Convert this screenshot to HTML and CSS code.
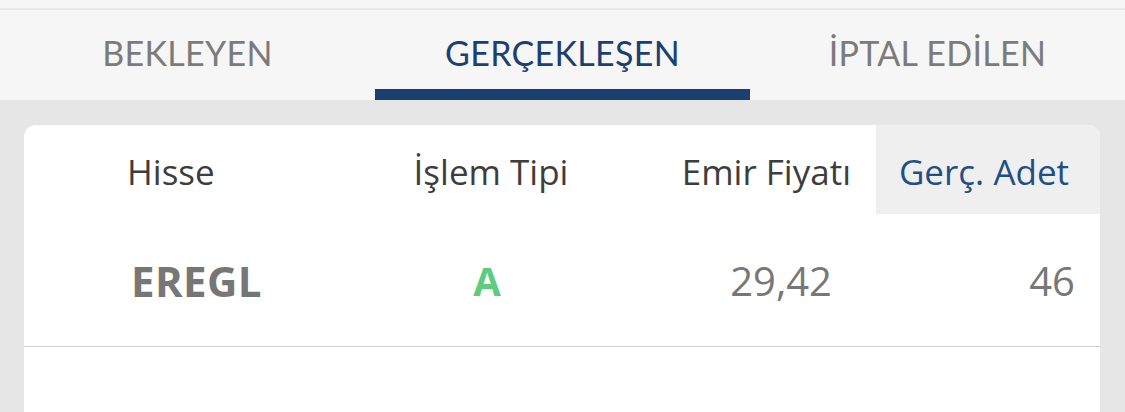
FILE: index.html
```html
<!DOCTYPE html>
<html lang="tr">
<head>
<meta charset="utf-8">
<link rel="stylesheet" href="styles.css">
</head>
<body>
<div class="topstrip"></div>
<nav class="tabs">
  <div class="tab">BEKLEYEN</div>
  <div class="tab active">GERÇEKLEŞEN</div>
  <div class="tab">İPTAL EDİLEN</div>
</nav>
<main class="content">
  <section class="card">
    <div class="row head">
      <div class="cell c1">Hisse</div>
      <div class="cell c2">İşlem Tipi</div>
      <div class="cell c3">Emir Fiyatı</div>
      <div class="cell c4 sorted">Gerç. Adet</div>
    </div>
    <div class="row data">
      <div class="cell c1 sym">EREGL</div>
      <div class="cell c2 buy">A</div>
      <div class="cell c3 num">29,42</div>
      <div class="cell c4 num">46</div>
    </div>
  </section>
</main>
</body>
</html>
```

FILE: styles.css
```css
* { box-sizing: border-box; }
html, body { margin: 0; padding: 0; }
body {
  width: 1125px;
  height: 412px;
  overflow: hidden;
  background: #e6e6e6;
  font-family: "Open Sans", "Liberation Sans", sans-serif;
}
.topstrip {
  height: 10px;
  background: #f7f7f7;
  border-bottom: 2px solid #e9e9e9;
}
.tabs {
  display: grid;
  grid-template-columns: repeat(3, 375px);
  height: 90px;
  background: #f6f6f6;
}
.tab {
  font-family: Lato, "Open Sans", sans-serif;
  font-size: 34px;
  color: #7b7b7b;
  text-align: center;
  padding-top: 22px;
  letter-spacing: 0.3px;
}
.tab.active {
  color: #1c3f72;
  border-bottom: 11px solid #1c3f72;
}
.content {
  padding: 25px 25px 0 24px;
}
.card {
  background: #fff;
  border-radius: 12px 12px 0 0;
  height: 300px;
  overflow: hidden;
}
.row {
  display: grid;
  grid-template-columns: 300px 330px 222px 224px;
}
.head { height: 89px; }
.head .cell {
  font-size: 35px;
  color: #3d3d3d;
  padding-top: 23px;
}
.data {
  height: 133px;
  border-bottom: 1px solid #cfcfcf;
  align-items: center;
}
.data .cell {
  font-size: 40px;
  color: #777;
}
.c1 { padding-left: 103px; }
.c2 { text-align: center; padding-left: 4px; }
.c3 { text-align: right; padding-right: 25px; }
.c4 { text-align: center; padding-right: 8px; }
.sorted {
  background: #efefef;
  color: #1f4f86 !important;
}
.sym {
  font-weight: 700;
  padding-left: 107px;
  font-size: 42px !important;
  letter-spacing: 0.4px;
  color: #767676 !important;
}
.buy {
  font-weight: 700;
  color: #5fcb7f !important;
  padding-right: 8px;
}
.data .c3 { padding-right: 44px; }
.data .c4 { text-align: right; padding-right: 25px; }
```
